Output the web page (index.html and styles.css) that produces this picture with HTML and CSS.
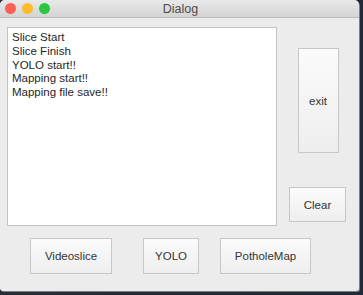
FILE: index.html
```html
<!DOCTYPE html>
<html>
<head>
<meta charset="utf-8">
<link rel="stylesheet" href="styles.css">
</head>
<body>
<div class="window">
  <div class="titlebar">
    <div class="lights">
      <span class="light red"></span>
      <span class="light yellow"></span>
      <span class="light green"></span>
    </div>
    <div class="title">Dialog</div>
  </div>
  <div class="content">
    <div class="top-row">
      <div class="log">
        <div>Slice Start</div>
        <div>Slice Finish</div>
        <div>YOLO start!!</div>
        <div>Mapping start!!</div>
        <div>Mapping file save!!</div>
      </div>
      <div class="side">
        <button class="btn exit">exit</button>
        <button class="btn clear">Clear</button>
      </div>
    </div>
    <div class="bottom-row">
      <button class="btn video">Videoslice</button>
      <button class="btn yolo">YOLO</button>
      <button class="btn pothole">PotholeMap</button>
    </div>
  </div>
</div>
</body>
</html>
```
FILE: styles.css
```css
html, body {
  margin: 0;
  padding: 0;
}
body {
  width: 363px;
  height: 295px;
  background: linear-gradient(90deg, #2a2d33 0%, #1d2a3a 100%);
  font-family: "Liberation Sans", Arial, sans-serif;
  overflow: hidden;
}
.window {
  width: 359px;
  height: 291px;
  background: #ececec;
  border-radius: 5px 5px 3px 3px;
  overflow: hidden;
  display: flex;
  flex-direction: column;
  box-shadow: 1px 1px 0 #7d7d7d;
}
.titlebar {
  height: 17px;
  flex: none;
  background: linear-gradient(#e9e9e9, #d4d4d4);
  border-bottom: 1px solid #bdbdbd;
  position: relative;
  display: flex;
  align-items: center;
  justify-content: center;
}
.lights {
  position: absolute;
  left: 5px;
  top: 3px;
  display: flex;
  gap: 6px;
}
.light {
  width: 11px;
  height: 11px;
  border-radius: 50%;
  display: block;
}
.red { background: #fc5f57; border: 0; }
.yellow { background: #fdbc2e; }
.green { background: #29c840; }
.title {
  font-size: 12.5px;
  color: #4c4c4c;
  margin-left: 2px;
}
.content {
  padding: 9px 0 0 7px;
  display: flex;
  flex-direction: column;
}
.top-row {
  display: flex;
}
.log {
  width: 267px;
  height: 197px;
  background: #ffffff;
  border: 1px solid #c3c3c3;
  padding: 3px 0 0 4px;
  box-sizing: content-box;
  width: 264px;
  height: 194px;
  font-size: 11.5px;
  line-height: 13.75px;
  color: #262626;
}
.side {
  flex: 1;
  display: flex;
  flex-direction: column;
  align-items: center;
}
.btn {
  font-family: "Liberation Sans", Arial, sans-serif;
  font-size: 11.5px;
  color: #333333;
  background: linear-gradient(#fbfbfb, #eeeeee);
  border: 1px solid #c7c7c7;
  border-radius: 0;
  padding: 0;
  margin: 0;
  box-sizing: border-box;
}
.exit {
  width: 41px;
  height: 105px;
  margin-top: 21px;
}
.clear {
  width: 57px;
  height: 35px;
  margin-top: 34px;
  margin-left: -1px;
}
.bottom-row {
  display: flex;
  margin-top: 12px;
  padding-left: 23px;
}
.bottom-row .btn {
  height: 36px;
}
.video { width: 82px; }
.yolo { width: 56px; margin-left: 31px; }
.pothole { width: 91px; margin-left: 21px; }
```
